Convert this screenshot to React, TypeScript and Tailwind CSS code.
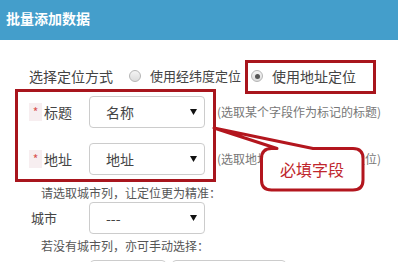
import React from "react";

const font = { fontFamily: '"Noto Sans CJK SC", "Noto Sans", sans-serif' };

function Radio({ checked }: { checked?: boolean }) {
  return (
    <span className="flex h-[12px] w-[12px] items-center justify-center rounded-full border border-[#b5b5b5] bg-gradient-to-b from-[#f4f4f4] to-[#dcdcdc]">
      {checked && <span className="h-[5px] w-[5px] rounded-full bg-[#555]" />}
    </span>
  );
}

function Select({ value, w = "w-[116px]" }: { value: string; w?: string }) {
  return (
    <div className={`flex h-[32px] ${w} items-center justify-between rounded-[4px] border border-[#cccccc] bg-white pl-[16px] pr-[7px] text-[14px] text-[#444]`}>
      <span>{value}</span>
      <svg width="7" height="6" viewBox="0 0 7 6">
        <path d="M0 0 H7 L3.5 6 Z" fill="#111" />
      </svg>
    </div>
  );
}

function Required({ label }: { label: string }) {
  return (
    <div className="flex w-[89px] items-center pl-[29px] text-[14px] text-[#444]">
      <span className="flex h-[18px] w-[13px] items-center justify-center bg-[#f7eef0] text-[12px] text-[#d9534f]">*</span>
      <span className="ml-[2px]">{label}</span>
    </div>
  );
}

export default function App() {
  return (
    <div className="relative h-[262px] w-[398px] overflow-hidden bg-white" style={font}>
      {/* 标题栏 */}
      <div className="flex h-[40px] items-center bg-[#449ecb] pb-[4px] pl-[6px] text-[14px] font-bold text-white">
        批量添加数据
      </div>

      {/* 定位方式 */}
      <div className="mt-[20px] flex h-[32px] items-center pl-[29px] text-[14px] text-[#444]">
        <span>选择定位方式</span>
        <span className="ml-[16px]"><Radio /></span>
        <span className="ml-[9px] text-[13px]">使用经纬度定位</span>
        <span className="ml-[10px]"><Radio checked /></span>
        <span className="ml-[9px]">使用地址定位</span>
      </div>

      <div className="mt-[4px] flex items-center">
        <Required label="标题" />
        <Select value="名称" />
        <span className="ml-[12px] text-[12px] text-[#777]">(选取某个字段作为标记的标题)</span>
      </div>

      <div className="mt-[15px] flex items-center">
        <Required label="地址" />
        <Select value="地址" />
        <span className="ml-[12px] text-[12px] text-[#777]">(选取地址字段作为标记的定位)</span>
      </div>

      <div className="mt-[9px] pl-[41px] text-[12px] leading-[18px] text-[#555]">请选取城市列，让定位更为精准：</div>

      <div className="flex items-center">
        <div className="w-[89px] pl-[31px] text-[13px] text-[#444]">城市</div>
        <Select value="---" />
      </div>

      <div className="mt-[3px] pl-[41px] text-[12px] leading-[18px] text-[#555]">若没有城市列，亦可手动选择：</div>

      <div className="mt-[5px] flex gap-[6px] pl-[90px]">
        <div className="h-[32px] w-[76px] rounded-[4px] border border-[#cccccc]" />
        <div className="h-[32px] w-[114px] rounded-[4px] border border-[#cccccc]" />
      </div>

      {/* 标注 */}
      <div className="absolute left-[245px] top-[60px] h-[34px] w-[131px] border-[3px] border-[#a8151d]" />
      <div className="absolute left-[15px] top-[89px] h-[93px] w-[201px] border-[3px] border-[#a8151d]" />

      <svg className="pointer-events-none absolute left-0 top-0" width="398" height="262">
        <path
          d="M214 128 L313 148.5 H353 Q363 148.5 363 158.5 V180 Q363 190 353 190 H271.5 Q261.5 190 261.5 180 V158.5 Q261.5 148.5 271.5 148.5 H277 Z"
          fill="#fff"
          stroke="#b3161e"
          strokeWidth="3"
          strokeLinejoin="round"
        />
      </svg>
      <div className="absolute left-[261px] top-[148px] flex h-[42px] w-[102px] items-center justify-center text-[16px] text-[#c0262c]">
        必填字段
      </div>
    </div>
  );
}
